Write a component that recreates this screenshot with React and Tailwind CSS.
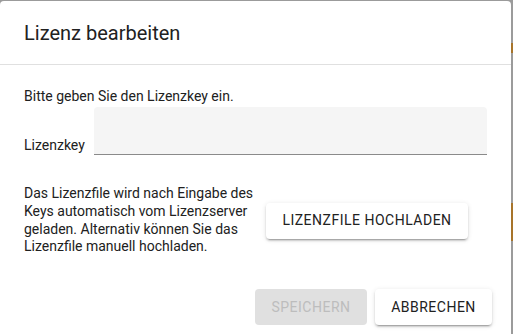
export default function App() {
  const btnShadow =
    "shadow-[0_3px_1px_-2px_rgba(0,0,0,0.2),0_2px_2px_0_rgba(0,0,0,0.14),0_1px_5px_0_rgba(0,0,0,0.12)]";
  return (
    <div
      className="w-[513px] h-[334px] overflow-hidden bg-[#9b9b9b] flex pt-px"
      style={{ fontFamily: "Roboto, 'Noto Sans', sans-serif" }}
    >
      <div className="w-[511px] shrink-0 h-[345px] bg-white rounded-[4px] flex flex-col text-[#212121]">
        <div className="h-[64px] px-6 flex items-center border-b border-[#e0e0e0]">
          <h2 className="text-[20px] font-normal">Lizenz bearbeiten</h2>
        </div>
        <div className="px-6 pt-[21px] flex flex-col">
          <p className="text-[14px] leading-[20px]">Bitte geben Sie den Lizenzkey ein.</p>
          <div className="flex items-end mt-px">
            <label className="w-[70px] text-[14px] leading-[20px]">Lizenzkey</label>
            <div className="w-[394px] h-[48px] bg-[#f5f5f5] rounded-t-[4px] border-b border-[#8a8a8a]"></div>
          </div>
          <div className="flex items-center mt-[30px]">
            <p className="w-[242px] text-[14px] leading-[17.75px]">
              Das Lizenzfile wird nach Eingabe des Keys automatisch vom Lizenzserver geladen. Alternativ können Sie das Lizenzfile manuell hochladen.
            </p>
            <button
              className={`w-[202px] h-[36px] bg-white rounded-[4px] text-[14px] tracking-[0.5px] text-[#212121] ${btnShadow}`}
            >
              LIZENZFILE HOCHLADEN
            </button>
          </div>
          <div className="flex justify-end gap-2 mt-[33px] -mr-[5px]">
            <button className="w-[112px] h-[36px] rounded-[4px] bg-[#e0e0e0] text-[#bdbdbd] text-[14px] tracking-[0.5px]">
              SPEICHERN
            </button>
            <button
              className={`w-[117px] h-[36px] bg-white rounded-[4px] text-[14px] tracking-[0.5px] text-[#212121] ${btnShadow}`}
            >
              ABBRECHEN
            </button>
          </div>
        </div>
      </div>
      <div className="w-[2px] flex flex-col">
        <div className="h-[42px]"></div>
        <div className="h-[10px] bg-[#a7742a]"></div>
        <div className="h-[150px]"></div>
        <div className="h-[38px] bg-[#a7742a]"></div>
      </div>
    </div>
  );
}
